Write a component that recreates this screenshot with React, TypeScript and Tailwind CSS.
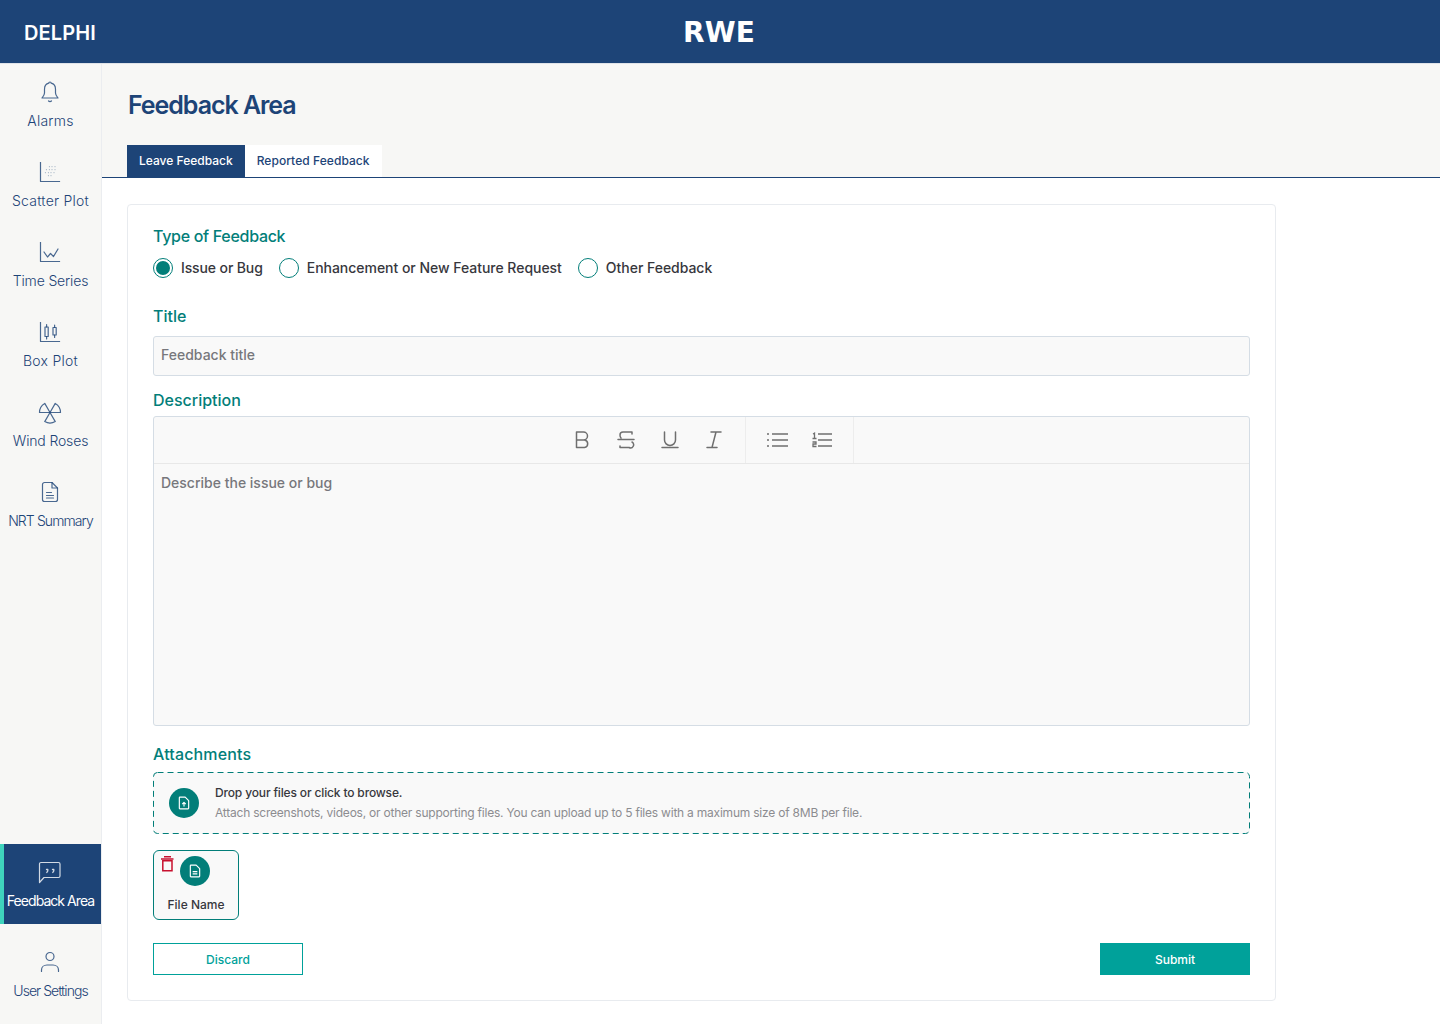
import { ReactNode } from "react";

function Icon({ children, size = 24 }: { children: ReactNode; size?: number }) {
  return (
    <svg width={size} height={size} viewBox="0 0 24 24" fill="none" stroke="currentColor" strokeWidth="1.2" strokeLinecap="round" strokeLinejoin="round">
      {children}
    </svg>
  );
}

const BellIcon = () => (
  <Icon>
    <path d="M12 2c.8 0 1.200.5 1.200 1.200 3 .7 4.300 3 4.300 6v3.800c0 2.200 1.200 3.500 2.500 5H4c1.300-1.500 2.500-2.800 2.500-5V9.200c0-3 1.300-5.300 4.300-6C10.800 2.500 11.200 2 12 2z" />
    <path d="M10.500 21c.8.700 2.200.700 3 0" />
  </Icon>
);

const scatterDots = [
  [11.3, 6.7], [14, 6.7], [17, 6.7],
  [8.3, 9.7], [11.3, 9.7], [14, 9.7], [17, 9.7],
  [7.3, 12.7], [10.3, 12.7], [13, 12.7], [16, 12.7],
  [10.3, 15.7], [13, 15.7],
];

const ScatterIcon = () => (
  <Icon>
    <path d="M2.500 2.500v19h19" strokeLinecap="square" />
    {scatterDots.map(([x, y]) => (
      <circle key={`${x}-${y}`} cx={x} cy={y} r="0.45" fill="currentColor" stroke="none" />
    ))}
  </Icon>
);

const TimeSeriesIcon = () => (
  <Icon>
    <path d="M2.500 2.500v19h19" strokeLinecap="square" />
    <path d="M6 12l3.500 5 3-3.500 3 3 4.500-7.500" />
  </Icon>
);

const BoxPlotIcon = () => (
  <Icon>
    <path d="M2.500 2.500v19h19" strokeLinecap="square" />
    <rect x="7" y="7" width="3.200" height="9.500" />
    <path d="M8.600 4.500V7M8.600 16.500V19" />
    <rect x="15" y="7.500" width="3.200" height="7.500" />
    <path d="M16.600 5V7.500M16.600 15v2.500" />
  </Icon>
);

const WindIcon = () => (
  <Icon>
    <path d="M12 12.500H1.500A10.500 10.500 0 0 1 6.750 3.400z" />
    <path d="M12 12.500l5.250-9.100a10.500 10.500 0 0 1 5.250 9.100z" />
    <path d="M12 12.500l5.250 9.100a10.500 10.500 0 0 1-10.500 0z" />
  </Icon>
);

const DocIcon = () => (
  <Icon>
    <path d="M14 2.500H6.500a2 2 0 0 0-2 2v15a2 2 0 0 0 2 2h11a2 2 0 0 0 2-2V8z" />
    <path d="M14 2.500V8h5.500M8.500 12.500h5M8.500 15.500h7M8.500 18h7" />
  </Icon>
);

const ChatIcon = () => (
  <Icon>
    <path d="M3 2.500h17.500a1.500 1.500 0 0 1 1.500 1.500v12a1.500 1.500 0 0 1-1.500 1.500H6L1.500 22.500V4A1.500 1.500 0 0 1 3 2.500z" />
    <path d="M8.500 9.500h1.300v1.300l-1 1.700M14.500 9.500h1.300v1.300l-1 1.700" strokeWidth="1.300" />
  </Icon>
);

const UserIcon = () => (
  <Icon>
    <circle cx="12" cy="6.500" r="4" />
    <path d="M3.500 21.500v-1.500c0-3 2.500-5 5.500-5h6c3 0 5.500 2 5.500 5v1.500" />
  </Icon>
);

function FileBadge({ plus }: { plus?: boolean }) {
  return (
    <span className="flex h-[30px] w-[30px] items-center justify-center rounded-full bg-[#027e79] text-white">
      <svg width="14" height="14" viewBox="0 0 12 12" fill="none" stroke="currentColor" strokeWidth="1" strokeLinejoin="round">
        <path d="M2 1.500a.5.500 0 0 1 .5-.5H7l3 3v6.500a.5.500 0 0 1-.5.500h-7a.5.500 0 0 1-.5-.5z" />
        {plus ? <path d="M6 9V5.500M4.500 7L6 5.500 7.500 7" /> : <path d="M4 6.500h4M4 8.500h4" />}
      </svg>
    </span>
  );
}

const TrashIcon = () => (
  <svg width="13" height="16" viewBox="0 0 13 16" fill="none" stroke="#c8102e" strokeWidth="1.500">
    <path d="M3 .8h7M0 3h12.500M1.800 4.800h9.200v10H1.800z" />
  </svg>
);

const tools = [
  <path key="b" d="M3.500 2h7a3.800 3.800 0 0 1 0 8h-7zM3.500 10h8a3.800 3.800 0 0 1 0 7.500h-8z" />,
  <path key="s" d="M15 4V2H6a3 3 0 0 0-3 3c0 1.500.5 2.500 1 3M1 9.500h16M15 12a3 3 0 0 1-3 5.500H3v-1.500" />,
  <path key="u" d="M3.500 2v8a5.500 5.500 0 0 0 11 0V2M1 17.500h16" />,
  <path key="i" d="M6 2h10M2 17.500h10M11 2L7 17.500" />,
];

function Toolbar() {
  return (
    <div className="flex h-[47px] justify-center border-b border-[#e8e8e8]">
      <div className="flex w-[197px] items-center justify-end gap-[26px] border-r border-[#ededed] pr-[22px]">
        {tools.map((t, i) => (
          <svg key={i} width="18" height="20" viewBox="0 0 18 20" fill="none" stroke="#6f6f6f" strokeWidth="1.500" strokeLinecap="round" strokeLinejoin="round">
            {t}
          </svg>
        ))}
      </div>
      <div className="flex w-[108px] items-center gap-[24px] border-r border-[#ededed] pl-[21px]">
        <svg width="21" height="16" viewBox="0 0 21 16" fill="none" stroke="#6f6f6f" strokeWidth="1.500">
          <path d="M5 2h16M5 8h16M5 14h16M0 2h2M0 8h2M0 14h2" />
        </svg>
        <svg width="20" height="16" viewBox="0 0 20 16" fill="none" stroke="#6f6f6f" strokeWidth="1.500">
          <path d="M6 2h14M6 8h14M6 14h14" />
          <path d="M1 2L2.500 1.200V6M.500 6.500h4M.500 10h3.500v2h-3v2.500h3.500" strokeWidth="1.300" />
        </svg>
      </div>
    </div>
  );
}

function NavItem({ icon, label, tracking, active }: { icon: ReactNode; label: string; tracking: string; active?: boolean }) {
  return (
    <div className={`flex h-20 flex-col items-center pt-[16px] ${active ? "border-l-4 border-[#3fd4bd] bg-[#1d4477] text-white" : "text-[#1d4477]"}`}>
      <span className={active ? "mb-[7px] -ml-[5px] text-white/80" : "mb-[7px] -ml-px text-[#1d4477]/80"}>{icon}</span>
      <span className={`whitespace-nowrap text-[14px] leading-[20px] ${tracking} ${active ? "-ml-[4px] font-normal" : "font-light"}`}>{label}</span>
    </div>
  );
}

function Label({ children, className = "" }: { children: ReactNode; className?: string }) {
  return <h3 className={`text-[16px] font-medium leading-[20px] text-[#027e79] ${className}`}>{children}</h3>;
}

function Radio({ label, checked, tight }: { label: string; checked?: boolean; tight?: boolean }) {
  return (
    <label className={`flex items-center gap-[8px] text-[14px] font-medium text-[#37373d] ${tight ? "tracking-[-0.12px]" : "tracking-[-0.03px]"}`}>
      <span className="flex h-[20px] w-[20px] items-center justify-center rounded-full border border-[#027e79] bg-white">
        {checked && <span className="h-[14px] w-[14px] rounded-full bg-[#027e79]" />}
      </span>
      {label}
    </label>
  );
}

export default function App() {
  return (
    <div className="flex min-h-[1024px] flex-col bg-white font-['Inter','Noto_Sans',sans-serif]">
      <header className="relative flex h-[64px] items-center border-b border-[#dfe3e8] bg-[#1d4477] px-[24px] pt-[2px] text-white">
        <span className="text-[20px] font-semibold tracking-[0.1px]">DELPHI</span>
        <span className="absolute left-[683px] top-[15px] font-['DejaVu_Sans',sans-serif] text-[28px] font-bold leading-[36px] tracking-[0.2px]">RWE</span>
      </header>

      <div className="flex flex-1">
        <aside className="flex w-[102px] shrink-0 flex-col justify-between border-r border-[#ebedf0] bg-[#f7f7f5] pb-[10px]">
          <nav>
            <NavItem icon={<BellIcon />} label="Alarms" tracking="tracking-[0.25px]" />
            <NavItem icon={<ScatterIcon />} label="Scatter Plot" tracking="tracking-[0.25px]" />
            <NavItem icon={<TimeSeriesIcon />} label="Time Series" tracking="tracking-[-0.15px]" />
            <NavItem icon={<BoxPlotIcon />} label="Box Plot" tracking="tracking-[0.25px]" />
            <NavItem icon={<WindIcon />} label="Wind Roses" tracking="tracking-[-0.15px]" />
            <NavItem icon={<DocIcon />} label="NRT Summary" tracking="tracking-[-0.9px]" />
          </nav>
          <nav className="flex flex-col gap-[10px]">
            <NavItem icon={<ChatIcon />} label="Feedback Area" tracking="tracking-[-0.95px]" active />
            <NavItem icon={<UserIcon />} label="User Settings" tracking="tracking-[-0.95px]" />
          </nav>
        </aside>

        <main className="min-w-0 flex-1">
          <div className="h-[114px] border-b border-[#1d4477] bg-[#f7f7f5] pl-[25px]">
            <h1 className="pl-px pt-[25px] text-[25px] font-semibold leading-[32px] tracking-[-1.05px] text-[#1d4477]">Feedback Area</h1>
            <div className="mt-[24px] flex h-[32px]">
              <div className="flex items-center bg-[#1d4477] px-[12px] text-[12px] font-medium text-white">Leave Feedback</div>
              <div className="flex items-center bg-white px-[12px] text-[12px] font-medium tracking-[0.06px] text-[#1d4477]">Reported Feedback</div>
            </div>
          </div>

          <div className="pl-[25px] pt-[26px]">
            <section className="h-[797px] w-[1149px] rounded-[4px] border border-[#e8ebef] bg-white px-[25px] pt-[21px]">
              <Label className="tracking-[-0.3px]">Type of Feedback</Label>
              <div className="mt-[11px] flex gap-[16px]">
                <Radio label="Issue or Bug" checked tight />
                <Radio label="Enhancement or New Feature Request" />
                <Radio label="Other Feedback" />
              </div>

              <div className="mt-[28px]">
                <Label>Title</Label>
                <div className="mt-[10px] flex h-[40px] items-center rounded-[3px] border border-[#d5dde5] bg-[#f9f9f9] px-[7px] pb-[3px] text-[14px] font-medium text-[#77777c]">
                  Feedback title
                </div>
              </div>

              <div className="mt-[14px]">
                <Label>Description</Label>
                <div className="mt-[6px] h-[310px] rounded-[3px] border border-[#d5dde5] bg-[#f9f9f9]">
                  <Toolbar />
                  <p className="px-[7px] pt-[8px] text-[14px] font-medium text-[#77777c]">Describe the issue or bug</p>
                </div>
              </div>

              <div className="mt-[18px]">
                <Label className="tracking-[0.15px]">Attachments</Label>
                <div className="relative mt-[8px] flex h-[62px] items-center gap-[16px] rounded-[4px] bg-[#f9f9f9] pl-[16px]">
                  <svg className="absolute left-0 top-0" width="1097" height="62" fill="none" stroke="#027e79">
                    <rect x="0.5" y="0.5" width="1096" height="61" rx="4" strokeDasharray="6 4" />
                  </svg>
                  <FileBadge plus />
                  <div>
                    <p className="text-[12px] font-medium leading-[20px] tracking-[-0.15px] text-[#37373d]">Drop your files or click to browse.</p>
                    <p className="text-[12px] leading-[20px] tracking-[-0.22px] text-[#8c8c90]">
                      Attach screenshots, videos, or other supporting files. You can upload up to 5 files with a maximum size of 8MB per file.
                    </p>
                  </div>
                </div>
              </div>

              <div className="relative mt-[16px] flex h-[70px] w-[86px] flex-col items-center rounded-[6px] border border-[#027e79] bg-[#f9f9f9] pr-[2px] pt-[5px]">
                <span className="absolute left-[7px] top-[5px]">
                  <TrashIcon />
                </span>
                <FileBadge />
                <span className="ml-[2px] mt-[9px] text-[12px] font-medium leading-[20px] text-[#37373d]">File Name</span>
              </div>

              <div className="mt-[23px] flex justify-between">
                <button className="h-[32px] w-[150px] border border-[#00a19a] bg-white pt-px text-[12px] font-medium text-[#00a19a]">Discard</button>
                <button className="h-[32px] w-[150px] bg-[#00a19a] pt-px text-[12px] font-medium text-white">Submit</button>
              </div>
            </section>
          </div>
        </main>
      </div>
    </div>
  );
}
